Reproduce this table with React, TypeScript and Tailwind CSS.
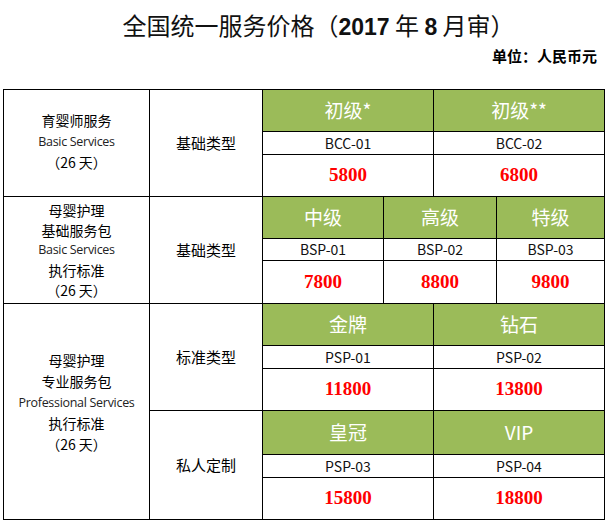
type Cell = { label: string; code: string; price: string; span: number };

const GREEN = "bg-[#9bbb59]";

const HeaderCells = ({ cells }: { cells: Cell[] }) => (
  <>
    {cells.map((c, i) => (
      <td
        key={`h${i}`}
        colSpan={c.span}
        className={`${GREEN} border border-black text-center text-[19px] text-white`}
      >
        {c.label}
      </td>
    ))}
  </>
);

const CodeRow = ({ cells, h }: { cells: Cell[]; h: string }) => (
  <tr className={h}>
    {cells.map((c, i) => (
      <td key={i} colSpan={c.span} className="border border-black text-center text-[14px] text-[#111]">
        {c.code}
      </td>
    ))}
  </tr>
);

const PriceRow = ({ cells, h }: { cells: Cell[]; h: string }) => (
  <tr className={h}>
    {cells.map((c, i) => (
      <td
        key={i}
        colSpan={c.span}
        className="border border-black text-center text-[19px] font-bold text-[#ff0000] [font-family:'Liberation_Serif',serif]"
      >
        {c.price}
      </td>
    ))}
  </tr>
);

const basic: Cell[] = [
  { label: "初级*", code: "BCC-01", price: "5800", span: 2 },
  { label: "初级**", code: "BCC-02", price: "6800", span: 2 },
];
const bsp: Cell[] = [
  { label: "中级", code: "BSP-01", price: "7800", span: 1 },
  { label: "高级", code: "BSP-02", price: "8800", span: 2 },
  { label: "特级", code: "BSP-03", price: "9800", span: 1 },
];
const std: Cell[] = [
  { label: "金牌", code: "PSP-01", price: "11800", span: 2 },
  { label: "钻石", code: "PSP-02", price: "13800", span: 2 },
];
const vip: Cell[] = [
  { label: "皇冠", code: "PSP-03", price: "15800", span: 2 },
  { label: "VIP", code: "PSP-04", price: "18800", span: 2 },
];

const En = ({ children }: { children: string }) => (
  <div className="text-[12.5px] text-[#222] [font-family:'Open_Sans',sans-serif] tracking-[-0.3px]">{children}</div>
);

export default function App() {
  return (
    <div className="w-[607px] h-[521px] bg-white text-black [font-family:'Noto_Sans_CJK_SC',sans-serif]">
      <div className="pt-[8px] text-center text-[24px] leading-[34px] text-[#111] pl-[30px]">
        全国统一服务价格（<span className="font-bold text-[23px] [font-family:'Liberation_Sans',sans-serif]">2017</span> 年{" "}
        <span className="font-bold text-[23px] [font-family:'Liberation_Sans',sans-serif]">8</span> 月审）
      </div>
      <div className="pr-[10px] mt-[1px] text-right text-[15px] font-bold leading-[22px]">单位：人民币元</div>
      <div className="pl-[3px] mt-[22px]">
        <table className="border-collapse border border-black table-fixed w-[601px]">
          <colgroup>
            <col className="w-[146px]" />
            <col className="w-[113px]" />
            <col className="w-[121px]" />
            <col className="w-[50px]" />
            <col className="w-[63px]" />
            <col className="w-[108px]" />
          </colgroup>
          <tbody>
            <tr className="h-[42px]">
              <td rowSpan={3} className="border border-black text-center align-middle text-[14px] leading-[21px] pb-[3px]">
                <div>育婴师服务</div>
                <En>Basic Services</En>
                <div>（26 天）</div>
              </td>
              <td rowSpan={3} className="border border-black text-center text-[15px]">
                基础类型
              </td>
              <HeaderCells cells={basic} />
            </tr>
            <CodeRow cells={basic} h="h-[23px]" />
            <PriceRow cells={basic} h="h-[42px]" />

            <tr className="h-[42px]">
              <td rowSpan={3} className="border border-black text-center align-middle text-[14px] leading-[20px]">
                <div>母婴护理</div>
                <div>基础服务包</div>
                <En>Basic Services</En>
                <div>执行标准</div>
                <div>（26 天）</div>
              </td>
              <td rowSpan={3} className="border border-black text-center text-[15px]">
                基础类型
              </td>
              <HeaderCells cells={bsp} />
            </tr>
            <CodeRow cells={bsp} h="h-[22px]" />
            <PriceRow cells={bsp} h="h-[43px]" />

            <tr className="h-[42px]">
              <td rowSpan={6} className="border border-black text-center align-middle text-[14px] leading-[21px] pb-[18px]">
                <div>母婴护理</div>
                <div>专业服务包</div>
                <En>Professional Services</En>
                <div>执行标准</div>
                <div>（26 天）</div>
              </td>
              <td rowSpan={3} className="border border-black text-center text-[15px]">
                标准类型
              </td>
              <HeaderCells cells={std} />
            </tr>
            <CodeRow cells={std} h="h-[23px]" />
            <PriceRow cells={std} h="h-[42px]" />

            <tr className="h-[44px]">
              <td rowSpan={3} className="border border-black text-center text-[15px]">
                私人定制
              </td>
              <HeaderCells cells={vip} />
            </tr>
            <CodeRow cells={vip} h="h-[23px]" />
            <PriceRow cells={vip} h="h-[42px]" />
          </tbody>
        </table>
      </div>
    </div>
  );
}
